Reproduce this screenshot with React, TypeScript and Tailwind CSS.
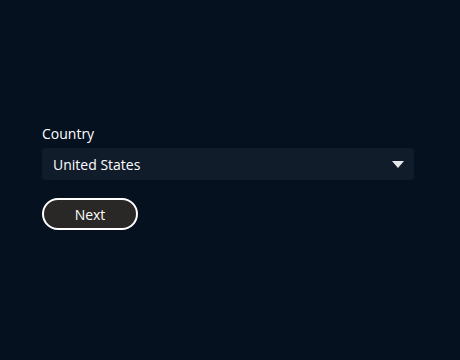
import { useState } from 'react';

export default function App() {
  const [country, setCountry] = useState('United States');

  return (
    <div
      className="min-h-screen w-full bg-[#061120] text-white"
      style={{ fontFamily: '"Open Sans", "Noto Sans", sans-serif' }}
    >
      <div className="pt-[124px] pl-[42px] w-[414px]">
        {/* Country field */}
        <label className="block text-[14px] leading-[20px] mb-[4px]">Country</label>
        <div className="relative">
          <select
            value={country}
            onChange={(e) => setCountry(e.target.value)}
            className="w-full h-[32px] appearance-none rounded-[4px] bg-[#111c2b] pl-[11px] pr-8 text-[14px] text-white outline-none"
          >
            <option>United States</option>
            <option>Canada</option>
            <option>Mexico</option>
          </select>
          <svg
            className="pointer-events-none absolute right-[10px] top-[13px]"
            width="12"
            height="7"
            viewBox="0 0 12 7"
          >
            <path d="M0 0h12L6 7z" fill="#e5e7eb" />
          </svg>
        </div>

        {/* Next button */}
        <button
          type="button"
          className="mt-[18px] w-[96px] h-[32px] rounded-full border-2 border-white bg-[#2a2826] text-[14px] text-white"
        >
          Next
        </button>
      </div>
    </div>
  );
}
